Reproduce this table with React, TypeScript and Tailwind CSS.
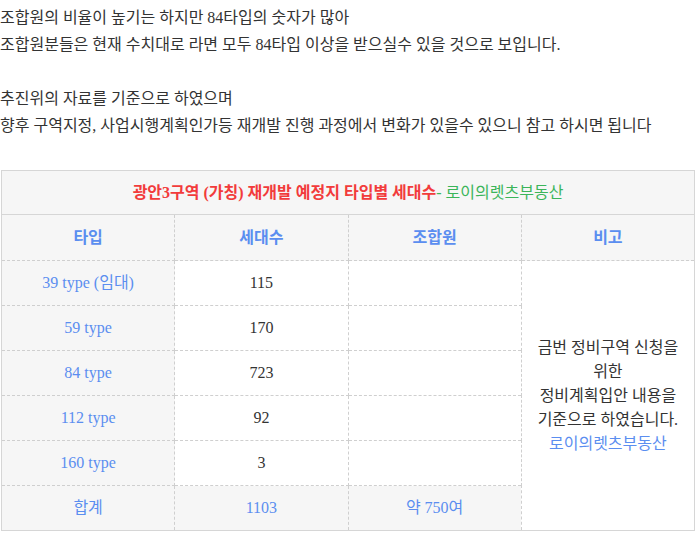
import React from "react";

export default function App() {
  const rows = [
    ["39 type (임대)", "115"],
    ["59 type", "170"],
    ["84 type", "723"],
    ["112 type", "92"],
    ["160 type", "3"],
  ];
  const cellB = "border border-dashed border-[#cfcfcf]";
  return (
    <div className="bg-white w-[696px] h-[538px] text-[16px] text-[#333] font-['Liberation_Serif','Noto_Sans_CJK_KR',sans-serif]">
      <div className="leading-[27px] pt-[4px]">
        <p>조합원의 비율이 높기는 하지만 84타입의 숫자가 많아</p>
        <p>조합원분들은 현재 수치대로 라면 모두 84타입 이상을 받으실수 있을 것으로 보입니다.</p>
        <p>&nbsp;</p>
        <p>추진위의 자료를 기준으로 하였으며</p>
        <p>향후 구역지정, 사업시행계획인가등 재개발 진행 과정에서 변화가 있을수 있으니 참고 하시면 됩니다</p>
      </div>
      <div className="mt-[31px] ml-[1px] w-[694px]">
        <table className="w-full border-collapse border border-solid border-[#d6d6d6] table-fixed text-center">
          <tbody>
            <tr className="h-[44px] bg-[#f6f6f6]">
              <td colSpan={4} className="border border-solid border-[#d6d6d6]">
                <span className="text-[#f23b3b] font-bold">광안3구역 (가칭) 재개발 예정지 타입별 세대수</span>
                <span className="text-[#3bb55a]">- 로이의렛츠부동산</span>
              </td>
            </tr>
            <tr className="h-[46px] bg-[#f6f6f6] text-[#5b8ef0] font-bold">
              <td className={cellB}>타입</td>
              <td className={cellB}>세대수</td>
              <td className={cellB}>조합원</td>
              <td className={cellB}>비고</td>
            </tr>
            {rows.map((r, i) => (
              <tr key={i} className="h-[45px]">
                <td className={cellB + " bg-[#f6f6f6] text-[#5b8ef0]"}>{r[0]}</td>
                <td className={cellB + " bg-white"}>{r[1]}</td>
                <td className={cellB + " bg-white"}></td>
                {i === 0 && (
                  <td rowSpan={6} className={cellB + " bg-white leading-[24px] px-[12px]"}>
                    금번 정비구역 신청을 위한
                    <br />
                    정비계획입안 내용을 기준으로 하였습니다.
                    <br />
                    <span className="text-[#5b8ef0]">로이의렛츠부동산</span>
                  </td>
                )}
              </tr>
            ))}
            <tr className="h-[45px] bg-[#f6f6f6] text-[#5b8ef0]">
              <td className={cellB}>합계</td>
              <td className={cellB}>1103</td>
              <td className={cellB}>약 750여</td>
            </tr>
          </tbody>
        </table>
      </div>
    </div>
  );
}
